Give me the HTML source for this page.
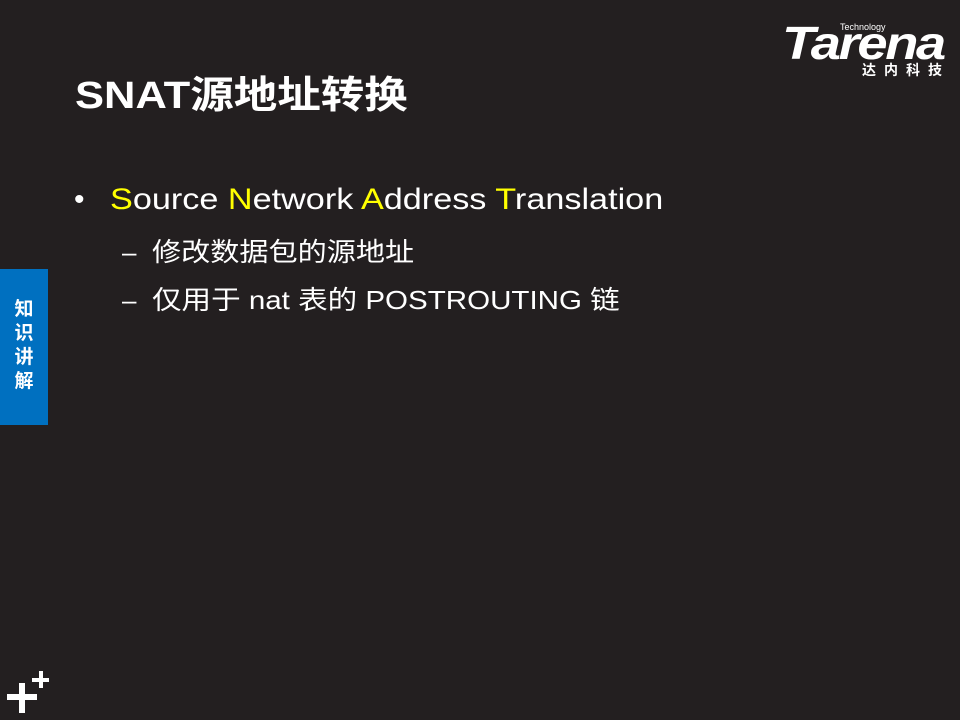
<!DOCTYPE html>
<html><head><meta charset="utf-8"><style>
body{margin:0;width:960px;height:720px;background:#231f20;position:relative;overflow:hidden;font-family:"Liberation Sans","Noto Sans CJK SC",sans-serif;color:#fff}
.a{position:absolute;white-space:nowrap}
.s{transform-origin:0 50%;transform:scaleX(1.13)}
.y{color:#ffff00}
</style></head><body>
<div class="a" style="left:782px;top:20px;font:italic bold 46px 'Liberation Sans',sans-serif;letter-spacing:-2px;line-height:46px;transform-origin:0 0;transform:scaleX(1.18)">Tarena</div>
<div class="a" style="left:840px;top:22px;font-size:9px">Technology</div>
<div class="a" style="left:862px;top:62px;font-size:14px;font-weight:bold;letter-spacing:8px;line-height:16px">达内科技</div>
<div class="a s" style="left:75px;top:72px;font-size:38px;font-weight:bold;line-height:48px;transform:scaleX(1.145)">SNAT源地址转换</div>
<div class="a" style="left:74px;top:180px;font-size:30px;line-height:40px">•</div>
<div class="a s" style="left:110px;top:180px;font-size:30px;line-height:40px;transform:scaleX(1.14)"><span class="y">S</span>ource <span class="y">N</span>etwork <span class="y">A</span>ddress <span class="y">T</span>ranslation</div>
<div class="a" style="left:122px;top:235px;font-size:26px;line-height:34px">–</div>
<div class="a s" style="left:152px;top:235px;font-size:26px;line-height:34px;transform:scaleX(1.12)">修改数据包的源地址</div>
<div class="a" style="left:122px;top:283px;font-size:26px;line-height:34px">–</div>
<div class="a s" style="left:152px;top:283px;font-size:26px;line-height:34px;transform:scaleX(1.136)">仅用于 nat 表的 POSTROUTING 链</div>
<div class="a" style="left:0;top:269px;width:48px;height:156px;background:#0070c0"></div>
<div class="a" style="left:12px;top:298px;width:24px;font-size:19px;font-weight:bold;line-height:24px;white-space:normal;text-align:center">知识讲解</div>
<div class="a" style="left:7px;top:694px;width:30px;height:6px;background:#fff"></div>
<div class="a" style="left:19px;top:683px;width:6px;height:30px;background:#fff"></div>
<div class="a" style="left:32px;top:678px;width:17px;height:4px;background:#fff"></div>
<div class="a" style="left:39px;top:671px;width:4px;height:17px;background:#fff"></div>
</body></html>
